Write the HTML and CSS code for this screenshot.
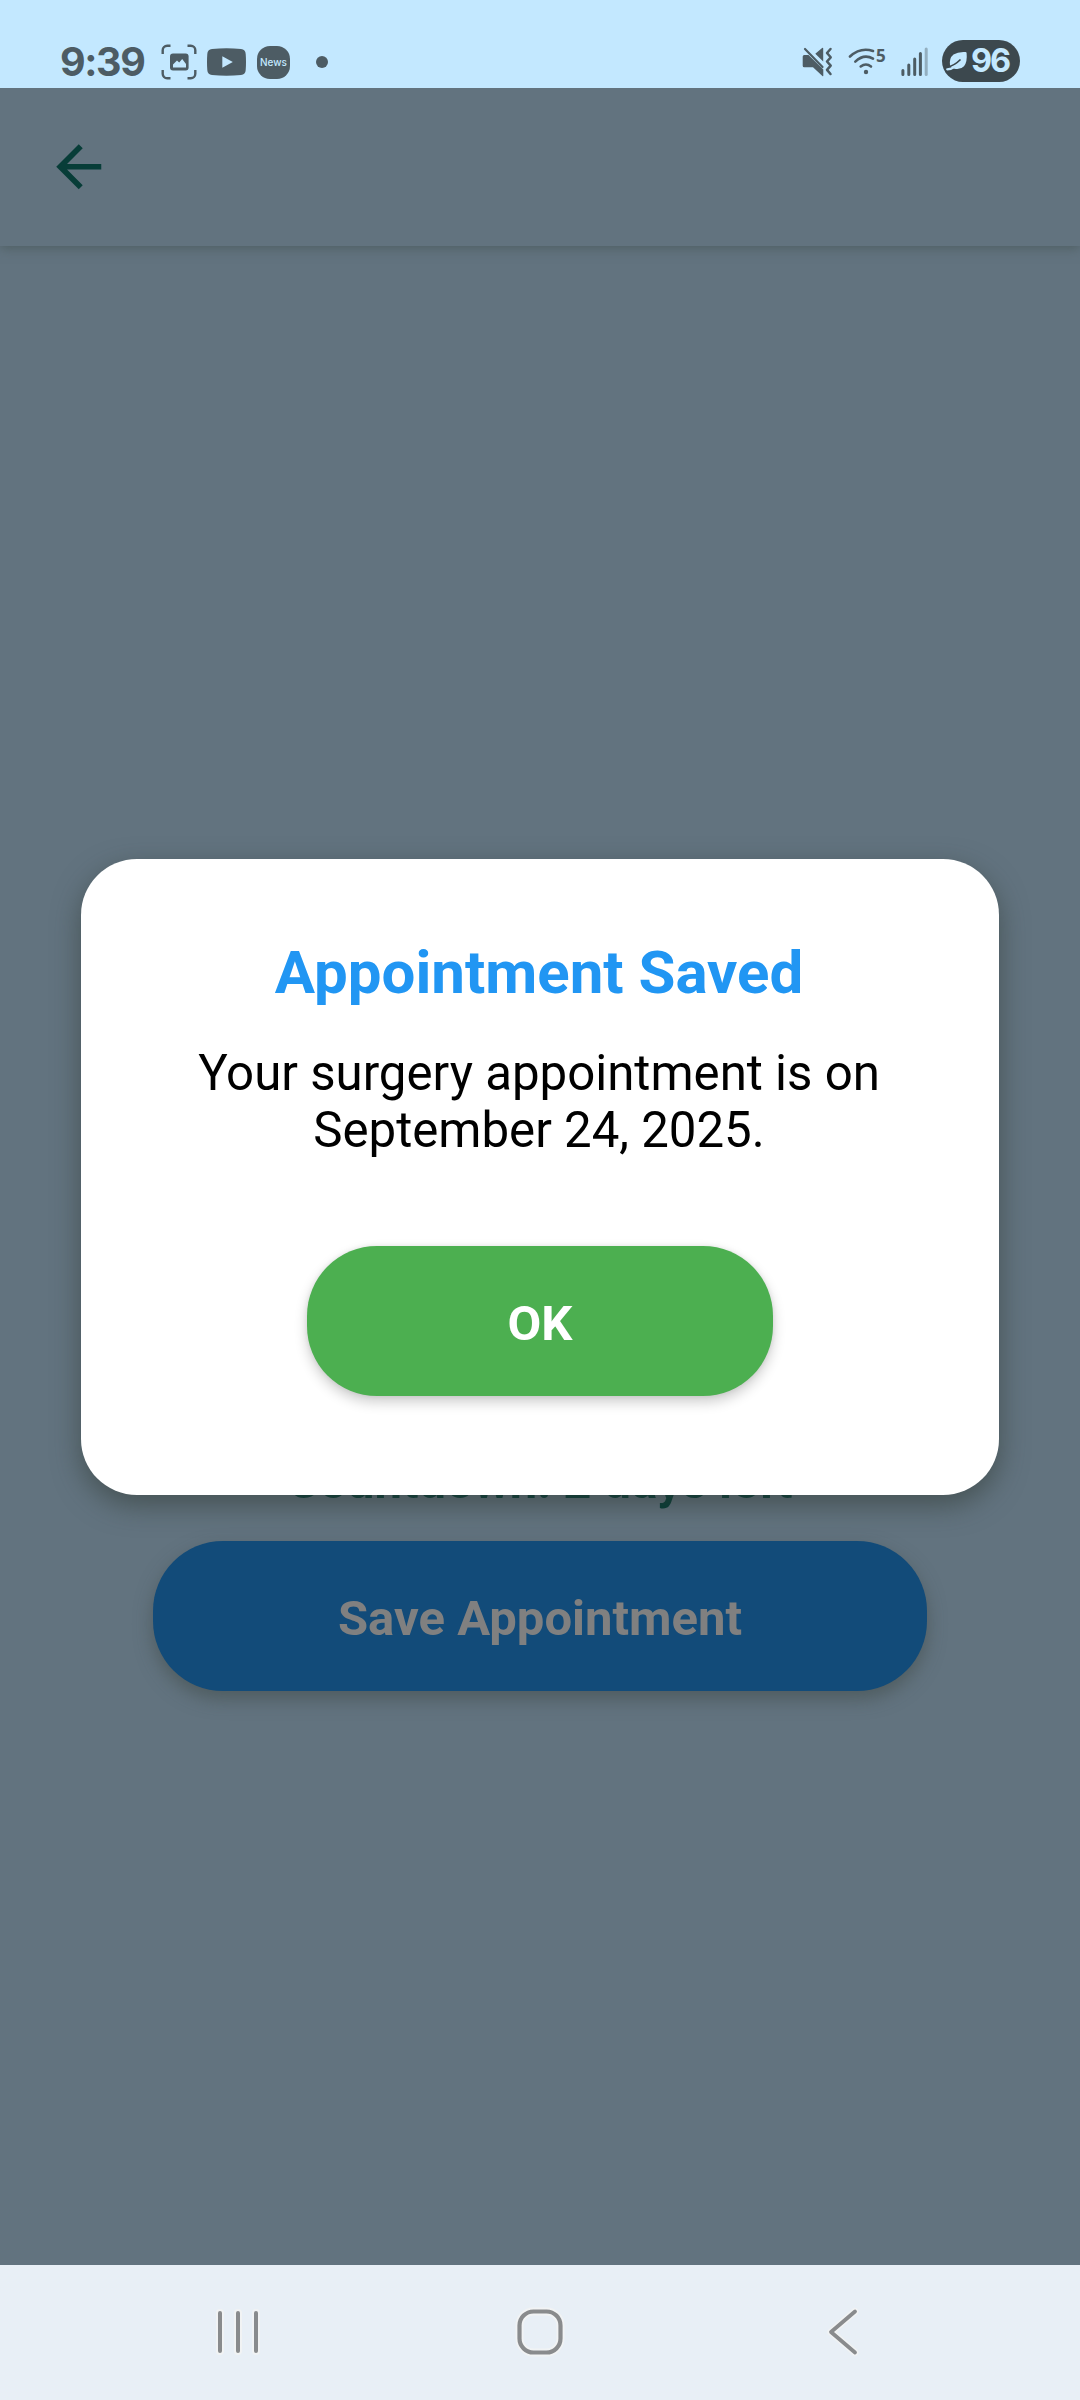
FILE: index.html
```html
<!DOCTYPE html>
<html lang="en">
<head>
<meta charset="utf-8">
<title>Appointment Saved</title>
<link rel="stylesheet" href="styles.css">
</head>
<body>
<div class="phone">
  <div class="status">
    <div class="status-group">
      <span class="clock">9:39</span>
      <svg class="ico-scan" width="36" height="36" viewBox="0 0 36 36">
        <path d="M1.7 10V6.2a4.5 4.5 0 0 1 4.5-4.5H9.5M26.5 1.7h3.3a4.5 4.5 0 0 1 4.5 4.5V10M34.3 26v3.8a4.5 4.5 0 0 1-4.5 4.5H26.5M9.500 34.300H6.200a4.500 4.500 0 0 1-4.500-4.500V26" fill="none" stroke="#4d5c64" stroke-width="2.4"/>
        <rect x="9" y="9.600" width="18.600" height="17" rx="3" fill="#4d5c64"/>
        <path d="M12 23.500v-3l4-4 2.200 2 3-3.500 3.800 5v3.500z" fill="#c3e8ff"/>
      </svg>
      <svg class="ico-tube" width="39" height="28" viewBox="0 0 39 28">
        <path d="M5 1Q19.500-.4 34 1q4.500.5 4.700 5 .6 8 0 16-.2 4.500-4.700 5-14.500 1.300-29 0-4.500-.5-4.700-5-.6-8 0-16Q.5 1.500 5 1z" fill="#4d5c64"/>
        <path d="M15.300 8.300v11.400l10.500-5.700z" fill="#c3e8ff"/>
      </svg>
      <span class="ico-news">News</span>
      <span class="dot"></span>
    </div>
    <div class="status-group">
      <svg class="ico-mute" width="31" height="30" viewBox="0 0 31 30">
        <path d="M.7 9.500q0-1.500 1.500-1.500H6.500l14.800 14.500V28.600q0 1-.9.300L11 20.200H2.200q-1.500 0-1.500-1.500zM13.300 6.800l6.800-5.700q1.100-.8 1.100.4V14.500z" fill="#4d5c64"/>
        <path d="M3 2l17.500 18" stroke="#4d5c64" stroke-width="2.200" stroke-linecap="round"/>
        <path d="M28.500 2l-3.500 4 3.700 4.300-3.700 4.200 3.700 4.200-3.700 4.200 3.500 4.100" fill="none" stroke="#4d5c64" stroke-width="2.500" stroke-linecap="round" stroke-linejoin="round"/>
      </svg>
      <div class="wifi">
        <svg width="28" height="28" viewBox="0 0 28 28">
          <g fill="none" stroke="#4d5c64" stroke-width="2.600" stroke-linecap="round">
            <path d="M2 8.500Q12.500-1.200 25 3"/>
            <path d="M7.300 13.600Q16 5.500 25 10.700"/>
            <path d="M12.700 18.500Q18 14.500 23 18.500"/>
          </g>
          <circle cx="18" cy="24" r="2.200" fill="#4d5c64"/>
        </svg>
        <span class="wifi-gen">5</span>
      </div>
      <svg class="ico-signal" width="28" height="30" viewBox="0 0 28 30">
        <g stroke="#4d5c64" stroke-width="3" stroke-linecap="round">
          <path d="M1.900 23.500v4M7.800 18v9.500M13.700 12v15.500M19.400 6.500v21"/>
          <path d="M25.200 2v25.500" opacity=".4"/>
        </g>
      </svg>
      <span class="battery">
        <svg width="22" height="20" viewBox="0 0 22 20">
          <path d="M4 14.500Q3 7 7.500 3.500 12 .5 19.500 1q1 0 1.100 1Q21.500 11 18 15.200 14.500 19 8.500 17.800 5 17 4 14.500z" fill="#c3e8ff"/>
          <path d="M1 16.200Q8 15 14.500 8.500" fill="none" stroke="#3c484e" stroke-width="1.700"/>
          <path d="M1.200 18.300q4.500 0 7.500-2.600" fill="none" stroke="#c3e8ff" stroke-width="2.200" stroke-linecap="round"/>
        </svg>
        <span class="level">96</span>
      </span>
    </div>
  </div>

  <div class="screen">
    <div class="appbar">
      <svg width="67.500" height="67.500" viewBox="0 0 24 24"><path d="M20 11H7.830l5.590-5.590L12 4l-8 8 8 8 1.410-1.410L7.830 13H20z" fill="#073d38"/></svg>
    </div>
    <div class="content">
      <div class="countdown">Countdown: 2 days left</div>
      <div class="save">Save Appointment</div>
    </div>
    <div class="modal">
      <div class="title">Appointment Saved</div>
      <div class="message">Your surgery appointment is on<br>September 24, 2025.</div>
      <div class="ok">OK</div>
    </div>
  </div>

  <div class="nav">
    <svg width="44" height="50" viewBox="0 0 44 50"><path d="M4 6v38M22 6v38M40 6v38" stroke="#f1f3f4" stroke-width="8" stroke-linecap="round"/><path d="M4 6v38M22 6v38M40 6v38" stroke="#898b8d" stroke-width="4" stroke-linecap="round"/></svg>
    <svg width="50" height="50" viewBox="0 0 50 50"><g fill="none"><rect x="4.500" y="4.500" width="41" height="41" rx="14" stroke="#f1f3f4" stroke-width="8"/><rect x="4.500" y="4.500" width="41" height="41" rx="14" stroke="#898b8d" stroke-width="4.200"/></g></svg>
    <svg width="34" height="50" viewBox="0 0 34 50"><g fill="none" stroke-linecap="round" stroke-linejoin="round"><path d="M29 4.500L5 25l24 20.500" stroke="#f1f3f4" stroke-width="7"/><path d="M29 4.500L5 25l24 20.500" stroke="#898b8d" stroke-width="3.800"/></g></svg>
  </div>
</div>
</body>
</html>
```
FILE: styles.css
```css
* { box-sizing: border-box; }
body { margin: 0; }
.phone {
  width: 1080px;
  height: 2400px;
  display: flex;
  flex-direction: column;
  overflow: hidden;
  font-family: Roboto, sans-serif;
}

/* Status bar */
.status {
  height: 88px;
  flex: none;
  display: flex;
  justify-content: space-between;
  padding: 36px 60px 0 60px;
  background: #c3e8ff;
}
.status-group { display: flex; align-items: center; height: 52px; }
.clock {
  width: 101px;
  font: 650 39.500px/50px Inter, sans-serif;
  letter-spacing: -1.400px;
  color: #4d5c64;
}
.ico-tube { margin-left: 10px; }
.ico-news {
  width: 33px;
  height: 33px;
  margin-left: 11px;
  border-radius: 13px;
  background: #4d5c64;
  color: #c3e8ff;
  font: 500 10px/33px Inter, sans-serif;
  text-align: center;
}
.dot {
  width: 12px;
  height: 12px;
  margin-left: 26px;
  border-radius: 50%;
  background: #4d5c64;
}
.wifi { display: flex; width: 39px; height: 28px; margin-left: 15px; }
.wifi-gen {
  font: 700 17px/17px "Noto Sans", sans-serif;
  margin-top: -1px;
  color: #4d5c64;
}
.ico-signal { margin-left: 14px; }
.battery {
  width: 78px;
  height: 42px;
  margin: -2px 0 0 13px;
  padding-left: 4px;
  display: flex;
  align-items: center;
  border-radius: 21px;
  background: #3c484e;
}
.level {
  margin-left: 3px;
  font: 700 32.500px/42px Inter, sans-serif;
  letter-spacing: -2px;
  color: #c3e8ff;
}

/* Dimmed screen behind the dialog */
.screen {
  position: relative;
  height: 2177px;
  flex: none;
  background: #62737f;
}
.appbar {
  position: relative;
  height: 158px;
  display: flex;
  align-items: center;
  padding-left: 45px;
  background: #62737f;
  box-shadow: 0 2px 11px rgba(70, 85, 85, .7);
  clip-path: inset(0 0 -20px 0);
}
.content {
  display: flex;
  flex-direction: column;
  align-items: center;
  padding-top: 1206px;
}
.countdown {
  height: 60px;
  font-size: 49px;
  line-height: 60px;
  font-weight: 700;
  color: #003a34;
}
.save {
  width: 774px;
  height: 150px;
  margin-top: 29px;
  border-radius: 70px;
  background: #124b79;
  color: #808080;
  font-size: 49px;
  line-height: 156px;
  font-weight: 700;
  text-align: center;
  box-shadow: 0 8px 18px rgba(60, 70, 65, .5);
}

/* Dialog */
.modal {
  position: absolute;
  left: 81px;
  top: 771px;
  width: 918px;
  height: 636px;
  padding-top: 79px;
  display: flex;
  flex-direction: column;
  align-items: center;
  border-radius: 56px;
  background: #fff;
  box-shadow: 0 10px 28px rgba(50, 60, 55, .6);
}
.title {
  margin-right: 2px;
  font-size: 60px;
  line-height: 70px;
  font-weight: 700;
  color: #2196f3;
}
.message {
  margin: 37px 2px 0 0;
  font-size: 49.200px;
  line-height: 57px;
  text-align: center;
  color: #000;
}
.ok {
  width: 466px;
  height: 150px;
  margin-top: 87px;
  border-radius: 70px;
  background: #4caf50;
  color: #fff;
  font-size: 49px;
  line-height: 156px;
  font-weight: 700;
  text-align: center;
  box-shadow: 0 6px 13px rgba(0, 0, 0, .2), 0 0 5px rgba(0, 0, 0, .08);
}

/* System navigation */
.nav {
  flex: 1;
  display: flex;
  align-items: flex-start;
  justify-content: space-between;
  padding: 42px 220px 0 216px;
  background: #e8eff6;
}
.nav svg:nth-child(2) { margin-right: 6px; }
```
